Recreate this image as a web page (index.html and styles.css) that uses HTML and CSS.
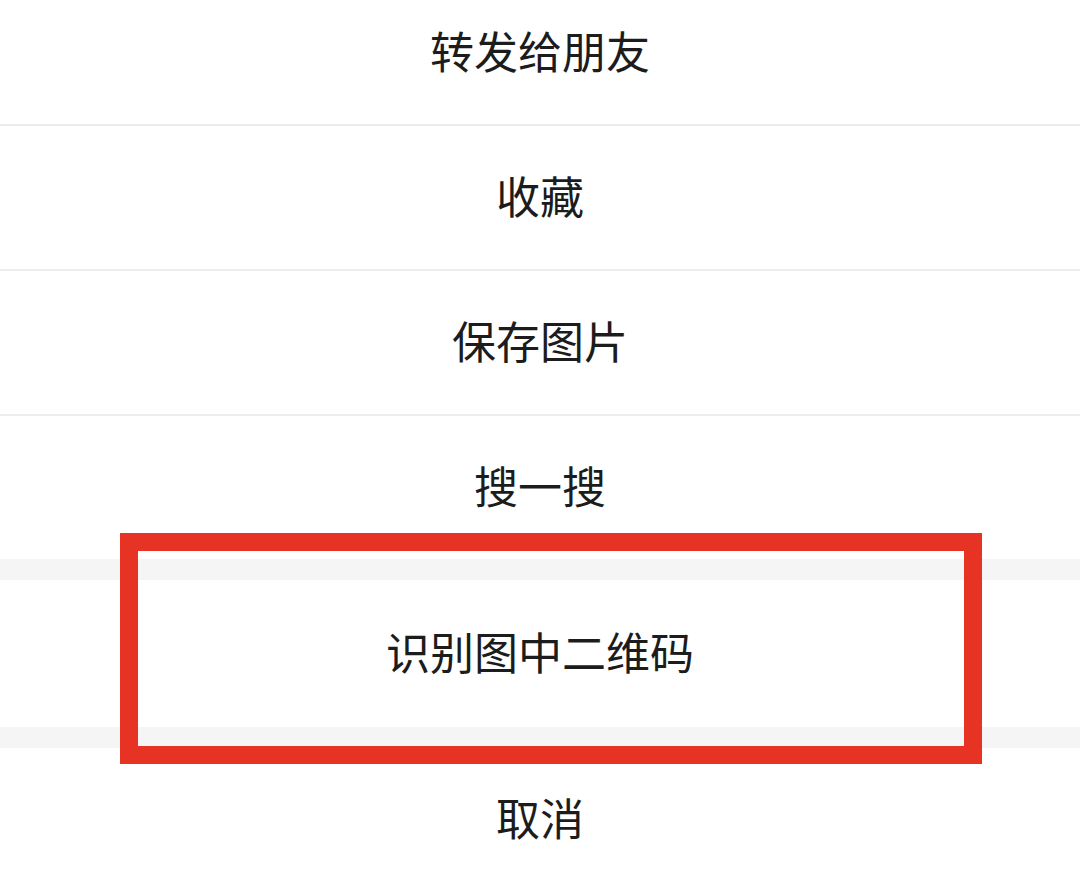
FILE: index.html
```html
<!DOCTYPE html>
<html lang="zh-CN">

<head>
    <meta charset="UTF-8">
    <meta name="viewport" content="width=device-width, initial-scale=1.0">
    <title>操作菜单</title>
    <link rel="stylesheet" href="styles.css">
</head>

<body>
    <div class="sheet">
        <div class="group">
            <div class="item">转发给朋友</div>
            <div class="item">收藏</div>
            <div class="item">保存图片</div>
            <div class="item">搜一搜</div>
        </div>
        <div class="gap"></div>
        <div class="group">
            <div class="item qr">识别图中二维码</div>
        </div>
        <div class="gap"></div>
        <div class="group">
            <div class="item">取消</div>
        </div>
    </div>
    <div class="highlight"></div>
</body>

</html>
```

FILE: styles.css
```css
body {
    margin: 0;
    background-color: #fff;
    font-family: "Noto Sans CJK SC", "Noto Sans", sans-serif;
    color: #1c1c1c;
    overflow: hidden;
}

.sheet {
    margin-top: -19px;
    background-color: #fff;
}

.group {
    display: flex;
    flex-direction: column;
}

.item {
    height: 137px;
    padding-bottom: 6px;
    display: flex;
    align-items: center;
    justify-content: center;
    font-size: 44px;
    line-height: 1;
    border-bottom: 2px solid #ededed;
}

.group .item:last-child {
    border-bottom: none;
}

.item.qr {
    height: 141px;
}

.gap {
    height: 21px;
    background-color: #f5f5f5;
}

.highlight {
    position: absolute;
    left: 120px;
    top: 533px;
    width: 826px;
    height: 195px;
    border: 18px solid #e63323;
}
```
